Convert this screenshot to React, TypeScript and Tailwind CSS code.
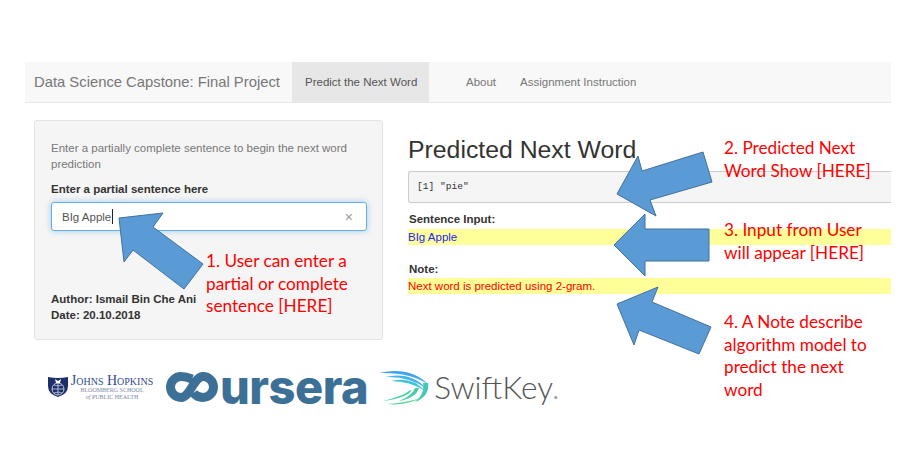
import React from 'react';

const noteFont = "font-['Lato',sans-serif] text-[17.200px] leading-[22.500px] text-[#ff0000]";

const Arrows = () => (
  <svg className="absolute inset-0 pointer-events-none" width="922" height="459" fill="#5b9bd5" stroke="#41719c" strokeWidth="1">
    <polygon points="119,218 163,213 153,227 203,264 184,289 133,250 124,262" />
    <polygon points="617,194 638,156 642,171 703,152 712,182 650,200 656,216" />
    <polygon points="614,245 645,214 645,229 709,229 709,261 645,261 645,276" />
    <polygon points="658,287 617,304 634,345 639,330 699,354 711,327 652,302" />
  </svg>
);

const HopkinsShield = () => (
  <svg width="22" height="22" viewBox="0 0 22 22">
    <path d="M1 1 Q11 3 21 1 L21 10 Q21 18 11 21 Q1 18 1 10 Z" fill="#1c2f6b" />
    <path d="M8 3 L11 5 L14 3 L13 7 L9 7 Z" fill="#fff" />
    <circle cx="11" cy="13" r="6" fill="none" stroke="#fff" strokeWidth="0.7" />
    <path d="M5 13 H17 M11 7 V19 M7 9 Q11 11 15 9 M7 17 Q11 15 15 17" stroke="#fff" strokeWidth="0.6" fill="none" />
  </svg>
);

const CourseraMark = () => (
  <svg width="52" height="30" viewBox="0 0 52 30" fill="none" stroke="#3c7096" strokeWidth="9">
    <path d="M26 7 Q20 4.500 15 4.500 A10.500 10.500 0 0 0 15 25.500 C24 25.500 28 4.500 37 4.500 A10.500 10.500 0 0 1 37 25.500 Q31 25.500 27.500 21" />
  </svg>
);

const SwiftKeyMark = () => (
  <svg width="50" height="36" viewBox="0 0 50 36">
    <path d="M0 4 Q30 -3 49 15 Q30 3 0 4 Z" fill="#3fa4f0" />
    <path d="M6 8 Q32 2 48 20 Q30 7 6 8 Z" fill="#45b4ea" />
    <path d="M12 12 Q33 7 46 22 Q31 12 12 12 Z" fill="#3fc0dd" />
    <path d="M49 14 Q51 27 36 33 Q46 25 44 14 Z" fill="#46c8b8" />
    <path d="M40 19 Q37 29 20 32 Q33 27 36 19 Z" fill="#45cfa8" />
    <path d="M33 21 Q28 29 4 32 Q24 27 30 22 Z" fill="#49d29c" />
    <path d="M8 35 Q26 37 42 29 Q26 34 8 35 Z" fill="#5cdc98" />
  </svg>
);

const App = () => {
  return (
    <div className="relative w-[922px] h-[459px] overflow-hidden bg-white pt-[62px] pl-[25px] font-['Liberation_Sans',sans-serif] text-[11.500px] leading-[16px] text-[#333333]">
      <nav className="flex w-[866px] h-[41px] items-stretch border-b border-[#e7e7e7] bg-[#f8f8f8]">
        <div className="w-[267px] pl-[9px] text-[14.800px] leading-[40px] text-[#777777]">Data Science Capstone: Final Project</div>
        <div className="w-[137px] pl-[13px] bg-[#e7e7e7] text-[#555555] leading-[40px]">Predict the Next Word</div>
        <div className="pl-[37px] text-[#777777] leading-[40px]">About</div>
        <div className="pl-[24px] text-[#777777] leading-[40px]">Assignment Instruction</div>
      </nav>

      <main className="flex pl-[9px] pt-[17px]">
        <section className="flex flex-col w-[349px] h-[220px] rounded-[3px] border border-[#e3e3e3] bg-[#f5f5f5] pl-[16px] pr-[15px] pt-[19px] pb-[16px]">
          <p className="text-[#777777]">Enter a partially complete sentence to begin the next word prediction</p>
          <label className="mt-[9px] font-bold">Enter a partial sentence here</label>
          <div className="mt-[5px] flex h-[29px] items-center rounded-[3px] border border-[#66afe9] bg-white pl-[10px] pr-[13px] shadow-[0_0_6px_rgba(102,175,233,0.6)] text-[#555555]">
            <span>BIg Apple</span>
            <span className="ml-px h-[15px] w-px bg-[#222222]" />
            <span className="ml-auto text-[14px] text-[#999999]">×</span>
          </div>
          <div className="mt-auto font-bold">
            <div>Author: Ismail Bin Che Ani</div>
            <div>Date: 20.10.2018</div>
          </div>
        </section>

        <section className="ml-[25px] w-[483px] pt-[15px]">
          <h1 className="text-[24.800px] leading-[30px]">Predicted Next Word</h1>
          <pre className="mt-[6px] h-[32px] rounded-l-[3px] border border-r-0 border-[#cccccc] bg-[#f5f5f5] pl-[8px] font-['Liberation_Mono',monospace] text-[9.600px] leading-[30px]">[1] "pie"</pre>
          <div className="mt-[8px] pl-px font-bold">Sentence Input:</div>
          <div className="mt-[2px] h-[16px] bg-[#ffff99] text-[#2222ff]">BIg Apple</div>
          <div className="mt-[16px] pl-px font-bold">Note:</div>
          <div className="mt-px h-[16px] bg-[#ffff99] text-[#ff0000]">Next word is predicted using 2-gram.</div>
        </section>
      </main>

      <footer className="flex items-center pl-[22px] pt-[29px]">
        <HopkinsShield />
        <div className="ml-px w-[84px] text-center font-['Liberation_Serif',serif] text-[#2f4a8f]">
          <div className="text-[14px] leading-[13px] whitespace-nowrap [font-variant:small-caps]">Johns Hopkins</div>
          <div className="text-[6px] leading-[6.500px] text-[#7d88a8]">BLOOMBERG SCHOOL</div>
          <div className="text-[6px] leading-[6.500px] text-[#7d88a8]"><i>of</i> PUBLIC HEALTH</div>
        </div>
        <div className="ml-[12px] flex items-center">
          <CourseraMark />
          <span className="ml-[2px] font-['Inter',sans-serif] text-[47px] font-extrabold leading-[30px] tracking-[-0.5px] text-[#3c7096]">ursera</span>
        </div>
        <div className="ml-[11px] flex items-center">
          <SwiftKeyMark />
          <span className="ml-[5px] font-['Lato',sans-serif] text-[31.500px] font-light leading-[36px] text-[#555555]">SwiftKey<span className="text-[#999999]">.</span></span>
        </div>
      </footer>

      <Arrows />

      <div className={`absolute left-[206px] top-[250px] ${noteFont}`}>1. User can enter a<br />partial or complete<br />sentence [HERE]</div>
      <div className={`absolute left-[724px] top-[137px] ${noteFont}`}>2. Predicted Next<br />Word Show [HERE]</div>
      <div className={`absolute left-[724px] top-[219px] ${noteFont}`}>3. Input from User<br />will appear [HERE]</div>
      <div className={`absolute left-[724px] top-[311px] ${noteFont}`}>4. A Note describe<br />algorithm model to<br />predict the next<br />word</div>
    </div>
  );
};

export default App;
